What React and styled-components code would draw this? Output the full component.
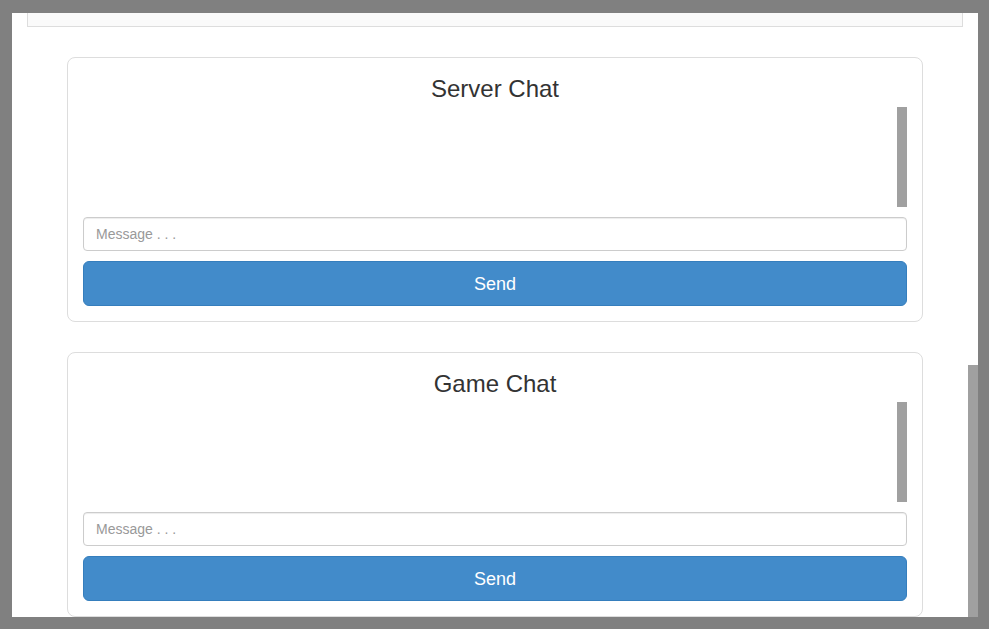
import React from 'react';
import styled, { createGlobalStyle } from 'styled-components';

const GlobalStyle = createGlobalStyle`
  html, body {
    margin: 0;
    padding: 0;
    background-color: #808080;
    overflow: hidden;
  }
  body {
    font-family: "Liberation Sans", Arial, Helvetica, sans-serif;
    color: #333333;
  }
  * {
    box-sizing: border-box;
  }
`;

const Frame = styled.div`
  width: 989px;
  height: 629px;
  padding: 13px 11px 12px 12px;
`;

const Viewport = styled.div`
  position: relative;
  width: 966px;
  height: 604px;
  overflow: hidden;
  background-color: #ffffff;
`;

const PageScroll = styled.div`
  position: absolute;
  right: 0;
  top: 352px;
  bottom: 0;
  width: 10px;
  background-color: #a0a0a0;
`;

const TopPanel = styled.div`
  height: 14px;
  margin: 0 15px;
  background-color: #fafafa;
  border: 1px solid #dddddd;
  border-top: none;
`;

const Stack = styled.div`
  display: flex;
  flex-direction: column;
  gap: 30px;
  margin: 30px 55px 0;
`;

const Card = styled.div`
  display: flex;
  flex-direction: column;
  flex-shrink: 0;
  height: 265px;
  padding: 18px 15px 15px;
  border: 1px solid #dddddd;
  border-radius: 8px;
  background-color: #ffffff;
`;

const Title = styled.h3`
  margin: 0 0 5px;
  height: 26px;
  font-size: 24px;
  font-weight: 400;
  line-height: 26px;
  text-align: center;
  color: #333333;
`;

const Messages = styled.div`
  position: relative;
  height: 100px;
  margin-bottom: 10px;
`;

const Thumb = styled.div`
  position: absolute;
  top: 0;
  right: 0;
  width: 10px;
  height: 100px;
  background-color: #a0a0a0;
`;

const Input = styled.input`
  display: block;
  width: 100%;
  height: 34px;
  margin: 0 0 10px;
  padding: 6px 12px;
  font-family: "Liberation Sans", Arial, Helvetica, sans-serif;
  font-size: 14px;
  color: #555555;
  background-color: #ffffff;
  border: 1px solid #cccccc;
  border-radius: 4px;
  box-shadow: inset 0 1px 1px rgba(0, 0, 0, 0.075);
  outline: none;

  &::placeholder {
    color: #999999;
  }
`;

const SendButton = styled.button`
  display: block;
  width: 100%;
  height: 45px;
  padding: 2px 0 0;
  font-family: "Liberation Sans", Arial, Helvetica, sans-serif;
  font-size: 18px;
  color: #ffffff;
  background-color: #428bca;
  border: 1px solid #357ebd;
  border-radius: 6px;
  cursor: pointer;
`;

const ChatCard = ({ title }) => (
  <Card>
    <Title>{title}</Title>
    <Messages>
      <Thumb />
    </Messages>
    <Input type="text" placeholder="Message . . ." />
    <SendButton>Send</SendButton>
  </Card>
);

const App = () => {
  return (
    <>
      <GlobalStyle />
      <Frame>
        <Viewport>
          <TopPanel />
          <Stack>
            <ChatCard title="Server Chat" />
            <ChatCard title="Game Chat" />
          </Stack>
          <PageScroll />
        </Viewport>
      </Frame>
    </>
  );
};

export default App;
